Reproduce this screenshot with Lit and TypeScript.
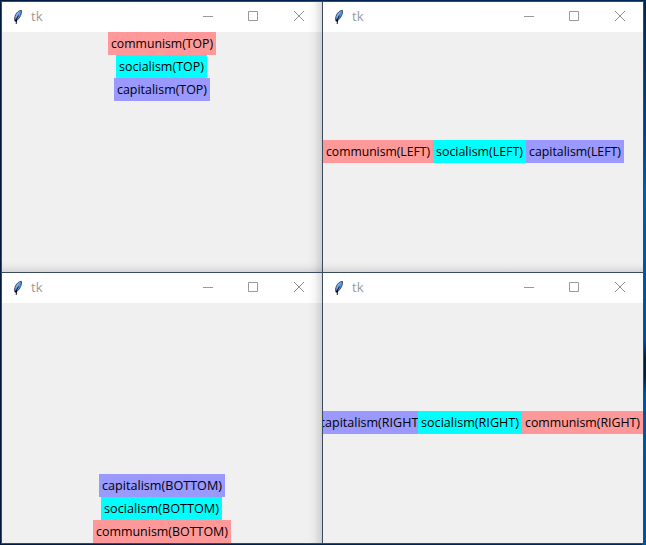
import { LitElement, html, css, svg } from "lit";
import { customElement, property } from "lit/decorators.js";

type Item = { name: string; tone: string; width: number; text: number };

@customElement("tk-label")
class TkLabel extends LitElement {
  @property() text = "";
  @property({ type: Number }) length = 0;

  static styles = css`
    :host { display: flex; justify-content: center; height: 23px; flex: none; }
    svg { display: block; flex: none; height: 23px; overflow: visible; }
    text { font-family: "Open Sans", "Noto Sans", sans-serif; font-size: 13px; fill: #000; }
  `;

  render() {
    return html`<svg width=${this.length} height="23">
      ${svg`<text x="0" y="16" textLength=${this.length} lengthAdjust="spacingAndGlyphs">${this.text}</text>`}
    </svg>`;
  }
}

@customElement("tk-window")
class TkWindow extends LitElement {
  @property() side = "TOP";
  @property({ attribute: false }) items: Item[] = [];

  static styles = css`
    :host { display: flex; flex-direction: column; width: 320px; height: 270px; background: #f0f0f0; overflow: hidden; position: relative; }
    .bar { display: flex; height: 30px; flex: none; background: #fff; }
    .feather { width: 11px; height: 16px; margin: 7px 0 0 10px; flex: none; }
    .title { margin-left: 8px; width: 156px; font: 13px/28px "Open Sans", "Noto Sans", sans-serif; color: #999; }
    .controls { display: flex; margin-left: auto; }
    .controls svg { width: 46px; height: 30px; display: block; }
    .body { display: flex; flex: 1; align-items: center; }
    .TOP { flex-direction: column; }
    .BOTTOM { flex-direction: column-reverse; }
    .RIGHT { flex-direction: row-reverse; }
    .LEFT, .RIGHT { padding-bottom: 1px; }
    .TOP .cyan, .BOTTOM .cyan { margin-right: 1px; }
    .RIGHT .violet { overflow: hidden; }
    .red { background: #ff9999; }
    .cyan { background: #00ffff; }
    .violet { background: #9999ff; }
    .shade-r, .shade-b { position: absolute; pointer-events: none; }
    .shade-r { right: 0; top: 0; bottom: 0; width: 14px; background: linear-gradient(to right, #0000, #00000008 45%, #00000024); }
    .shade-b { left: 0; right: 0; bottom: 0; height: 11px; background: linear-gradient(#0000, #00000006 45%, #0000001c); }
  `;

  render() {
    const left = this.side === "TOP" || this.side === "BOTTOM";
    const upper = this.side === "TOP" || this.side === "LEFT";
    return html`
      <div class="bar">
        <svg class="feather" viewBox="0 0 11 16" aria-hidden="true">
          <path d="M9.5 1.4C7 1.4 4.8 3.2 3.5 6 2.6 8 2.4 10 2.8 11.8L5.6 10.8C8 8.6 9.8 5 9.5 1.4Z" fill="#4f94ec" stroke="#35404e" stroke-width=".9"/>
          <path d="M7.6 2.8C5.8 4 4.6 5.8 3.9 8.2" fill="none" stroke="#a9c5ce" stroke-width=".9"/>
          <path d="M6.4 6.6 4.6 10 4.2 15" fill="none" stroke="#101820" stroke-width="1"/>
          <path d="M2.8 10.4h2.6l-.8 2H3z" fill="#000"/>
        </svg>
        <span class="title">tk</span>
        <div class="controls">
          <svg viewBox="0 0 46 30"><path d="M19 14.5h10" stroke="#999"/></svg>
          <svg viewBox="0 0 46 30"><path d="M18.5 9.5h9v9h-9z" fill="none" stroke="#999"/></svg>
          <svg viewBox="0 0 46 30"><path d="M18 9l10 10M28 9 18 19" fill="none" stroke="#8e8e8e"/></svg>
        </div>
      </div>
      <div class="body ${this.side}">
        ${this.items.map(
          (i) => html`<tk-label class=${i.tone} style="width:${i.width}px"
            .text=${`${i.name}(${this.side})`} .length=${i.text}></tk-label>`
        )}
      </div>
      ${left ? html`<div class="shade-r"></div>` : null}
      ${upper ? html`<div class="shade-b"></div>` : null}
    `;
  }
}

const items = (...w: number[]): Item[] => [
  { name: "communism", tone: "red", width: w[0], text: w[0] - 6 },
  { name: "socialism", tone: "cyan", width: w[1], text: w[1] - 6 },
  { name: "capitalism", tone: "violet", width: w[2], text: (w[3] ?? w[2]) - 6 },
];

@customElement("app-root")
class AppRoot extends LitElement {
  static styles = css`
    :host { display: block; box-sizing: border-box; width: 646px; height: 545px; padding: 1px;
      background: linear-gradient(#001b42, #001b42) left / 2px 100% no-repeat,
        linear-gradient(#002653 0, #00478a 150px, #005fa8 190px, #004e91 340px, #001c38 358px, #001c38 376px, #00549a 394px, #005299) right / 4px 100% no-repeat,
        linear-gradient(to right, #001b42, #002a5c); }
    .desk { display: grid; grid-template-columns: 320px 320px; grid-template-rows: 270px 270px;
      gap: 1px; padding: 1px; width: 641px; height: 541px; background: #3a4b5f; }
  `;

  render() {
    return html`<div class="desk">
      <tk-window side="TOP" .items=${items(108, 91, 96)}></tk-window>
      <tk-window side="LEFT" .items=${items(110, 93, 98)}></tk-window>
      <tk-window side="BOTTOM" .items=${items(138, 121, 126)}></tk-window>
      <tk-window side="RIGHT" .items=${items(121, 104, 95, 109)}></tk-window>
    </div>`;
  }
}
